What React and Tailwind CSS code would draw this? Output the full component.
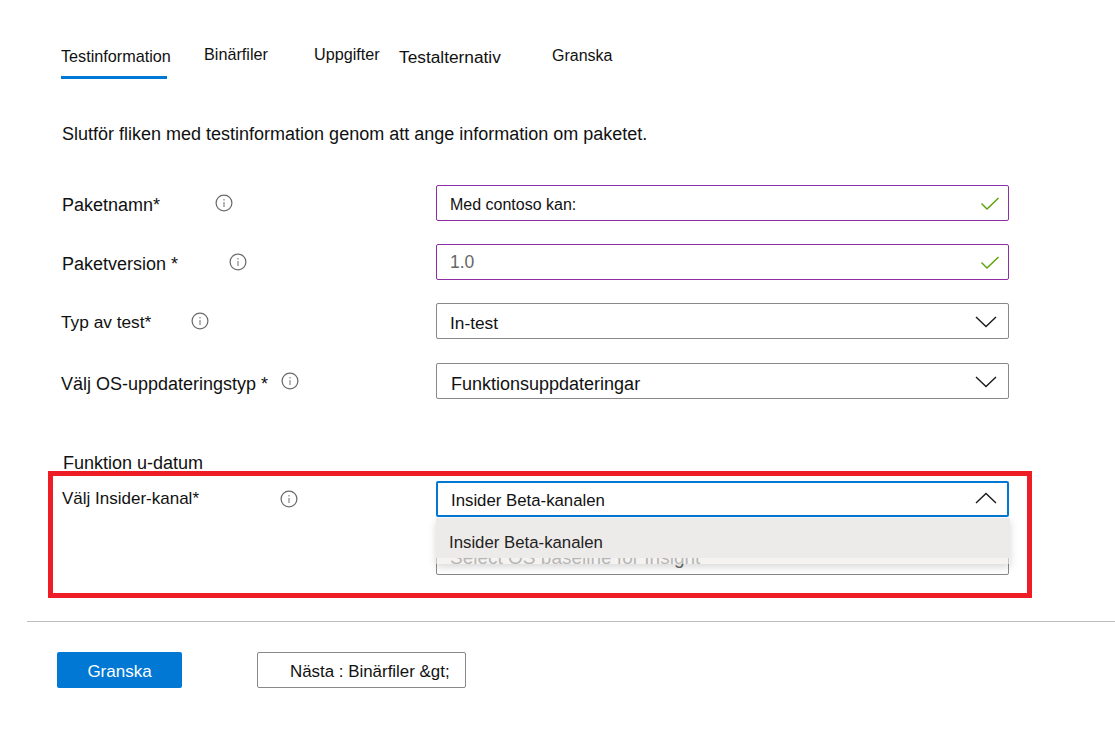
function InfoIcon({ className }) {
  return (
    <svg width="18" height="18" viewBox="0 0 18 18" fill="none" className={className}>
      <circle cx="9" cy="9" r="7.9" stroke="#6a6a6a" strokeWidth="1.25" />
      <path d="M9 8v5" stroke="#8f8f8f" strokeWidth="1.3" />
      <path d="M9 5v1.4" stroke="#8f8f8f" strokeWidth="1.3" />
    </svg>
  );
}

function CheckIcon() {
  return (
    <svg width="20" height="14" viewBox="0 0 20 14" fill="none" className="absolute right-[8px] top-[11px]">
      <path d="M1.5 6.5L7 12L18.5 1" stroke="#57a300" strokeWidth="1.4" />
    </svg>
  );
}

function Chevron({ up }) {
  return (
    <svg
      width="22"
      height="12"
      viewBox="0 0 22 12"
      fill="none"
      className={"absolute " + (up ? "right-[10px] top-[9px]" : "right-[11px] top-[12px]")}
    >
      <path d={up ? "M1 11L11 1.5L21 11" : "M1 1L11 10.5L21 1"} stroke="#1b1a19" strokeWidth="1.4" />
    </svg>
  );
}

function Field({ tone, children, icon, className }) {
  return (
    <div
      className={
        "relative h-[36px] w-[573px] rounded-[2px] border bg-white flex items-center " +
        (tone === "purple" ? "border-[#8e2ea6] " : "border-[#8a8886] ") +
        className
      }
    >
      {children}
      {icon}
    </div>
  );
}

function Row({ label, labelClass, infoClass, children, className }) {
  return (
    <div className={"flex items-start " + className}>
      <div className="w-[374px] flex items-start shrink-0">
        <span className={"leading-[20px] text-[#111] whitespace-nowrap " + labelClass}>{label}</span>
        <InfoIcon className={infoClass} />
      </div>
      {children}
    </div>
  );
}

export default function App() {
  return (
    <div className="relative h-[729px] w-[1115px] overflow-hidden bg-white font-['Liberation_Sans',Arial,sans-serif] text-[#111]">
      {/*---- Tabs ----*/}
      <div className="flex items-start pl-[61px] pt-[46px] h-[79px] text-[16.2px] leading-[20px]">
        <div className="w-[143px] shrink-0">
          <div className="w-[106px] h-[33px] border-b-[3px] border-[#0078d4] whitespace-nowrap">Testinformation</div>
        </div>
        <div className="w-[110px] shrink-0 -mt-[2px]">Binärfiler</div>
        <div className="w-[85px] shrink-0 -mt-[2px]">Uppgifter</div>
        <div className="w-[153px] shrink-0 text-[17.3px] mt-px">Testalternativ</div>
        <div className="text-[16px]">Granska</div>
      </div>

      <p className="ml-[62px] mt-[45px] text-[18px] leading-[20px] whitespace-nowrap">
        Slutför fliken med testinformation genom att ange information om paketet.
      </p>

      {/*---- Form ----*/}
      <div className="mt-[41px] pl-[62px]">
        <Row label="Paketnamn*" labelClass="text-[18px] mt-[10px]" infoClass="ml-[55px] mt-[9px]">
          <Field tone="purple" icon={<CheckIcon />}>
            <span className="ml-[13px] text-[16px] mt-[3px]">Med contoso kan:</span>
          </Field>
        </Row>
        <Row label="Paketversion *" labelClass="text-[18px] mt-[10px]" infoClass="ml-[51px] mt-[9px]" className="mt-[23px]">
          <Field tone="purple" icon={<CheckIcon />}>
            <span className="ml-[13px] text-[17.5px] text-[#666]">1.0</span>
          </Field>
        </Row>
        <Row label="Typ av test*" labelClass="text-[17.3px] -ml-px mt-[9px]" infoClass="ml-[40px] mt-[9px]" className="mt-[23px]">
          <Field icon={<Chevron />}>
            <span className="ml-[13px] text-[17.3px] mt-[5px]">In-test</span>
          </Field>
        </Row>
        <Row label="Välj OS-uppdateringstyp *" labelClass="text-[18px] -ml-px mt-[11px]" infoClass="ml-[13px] mt-[9px]" className="mt-[24px]">
          <Field icon={<Chevron />}>
            <span className="ml-[14px] text-[18px] mt-[6px]">Funktionsuppdateringar</span>
          </Field>
        </Row>

        <div className="ml-px mt-[54px] text-[18px] leading-[20px] whitespace-nowrap">Funktion u-datum</div>

        <Row label="Välj Insider-kanal*" labelClass="text-[17px] mt-[8px]" infoClass="ml-[81px] mt-[9px]" className="mt-[8px]">
          <div className="relative">
            <Field icon={<Chevron up />} className="border-2 border-[#0078d4]">
              <span className="ml-[13px] text-[16.8px] mt-[4px]">Insider Beta-kanalen</span>
            </Field>
            {/* baseline field, mostly hidden behind the open menu */}
            <Field className="mt-[22px] items-start">
              <span className="ml-[13px] mt-[6px] text-[19px] text-[#666] leading-[24px] whitespace-nowrap">Select OS baseline for Insight</span>
            </Field>
            {/*---- Open menu, its lower edge lets the text behind it show ----*/}
            <div className="absolute left-0 top-[37px] h-[46px] w-[574px] bg-[linear-gradient(#edebe9_88%,rgba(237,235,233,0.6)_88%)] shadow-[0_3px_8px_rgba(0,0,0,0.16)] flex items-center">
              <span className="ml-[13px] text-[16.8px] text-[#222] mt-[3px]">Insider Beta-kanalen</span>
            </div>
          </div>
        </Row>
      </div>

      {/*---- Highlight frame ----*/}
      <div className="absolute left-[48px] top-[471px] h-[127px] w-[984px] border-[5px] border-[#ee1c25]" />

      {/*---- Footer ----*/}
      <div className="absolute left-[27px] right-0 top-[621px] border-t border-[#bdbdbd]" />
      <div className="absolute left-[57px] top-[652px] flex gap-[75px]">
        <button className="h-[36px] w-[125px] rounded-[2px] bg-[#0078d4] pt-[3px] text-[17px] text-white">Granska</button>
        <button className="h-[36px] w-[209px] rounded-[2px] border border-[#8a8886] bg-white pl-[32px] pt-[3px] text-left text-[16.9px] text-[#111]">
          Nästa : Binärfiler &amp;gt;
        </button>
      </div>
    </div>
  );
}
